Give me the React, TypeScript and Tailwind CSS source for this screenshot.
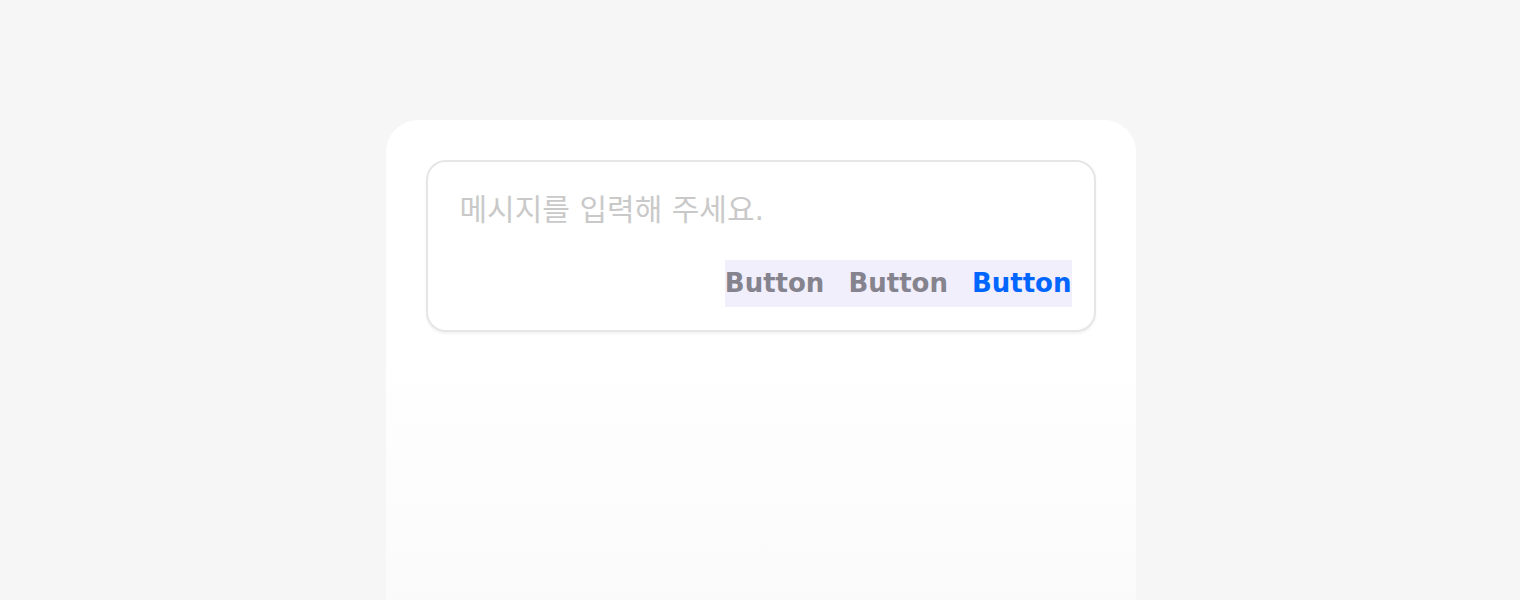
import React, { useState } from 'react';

const fontClasses = "font-['DejaVu_Sans','Noto_Sans_CJK_KR',sans-serif]";
const buttonClasses = "text-[26px] leading-[47px] font-semibold";

export default function App() {
  const [message, setMessage] = useState('');

  return (
    <div className="h-[600px] bg-[#f6f6f6] flex justify-center pt-[120px] pl-px overflow-hidden">
      {/* card */}
      <div className="w-[750px] h-[560px] shrink-0 rounded-[32px] bg-linear-to-b from-white from-40% to-[#f9f9f9] px-10 pt-10">
        <div className={`${fontClasses} rounded-[20px] border-2 border-[#e6e6e6] bg-white pl-8 pr-[22px] pt-[27px] pb-[23px] shadow-[0_2px_3px_rgba(0,0,0,0.05)]`}>
          <textarea
            value={message}
            onChange={(e) => setMessage(e.target.value)}
            placeholder="메시지를 입력해 주세요."
            className="block w-full h-[71px] resize-none outline-none text-[30px] leading-[42px] text-[#333] placeholder:text-[#c9c9c9]"
          />
          <div className="flex justify-end">
            <div className="flex items-center gap-6 bg-[#f1effc] h-[47px]">
              <button className={`${buttonClasses} text-[#85838e]`}>Button</button>
              <button className={`${buttonClasses} text-[#85838e]`}>Button</button>
              <button className={`${buttonClasses} text-[#0066ff]`}>Button</button>
            </div>
          </div>
        </div>
      </div>
    </div>
  );
}
